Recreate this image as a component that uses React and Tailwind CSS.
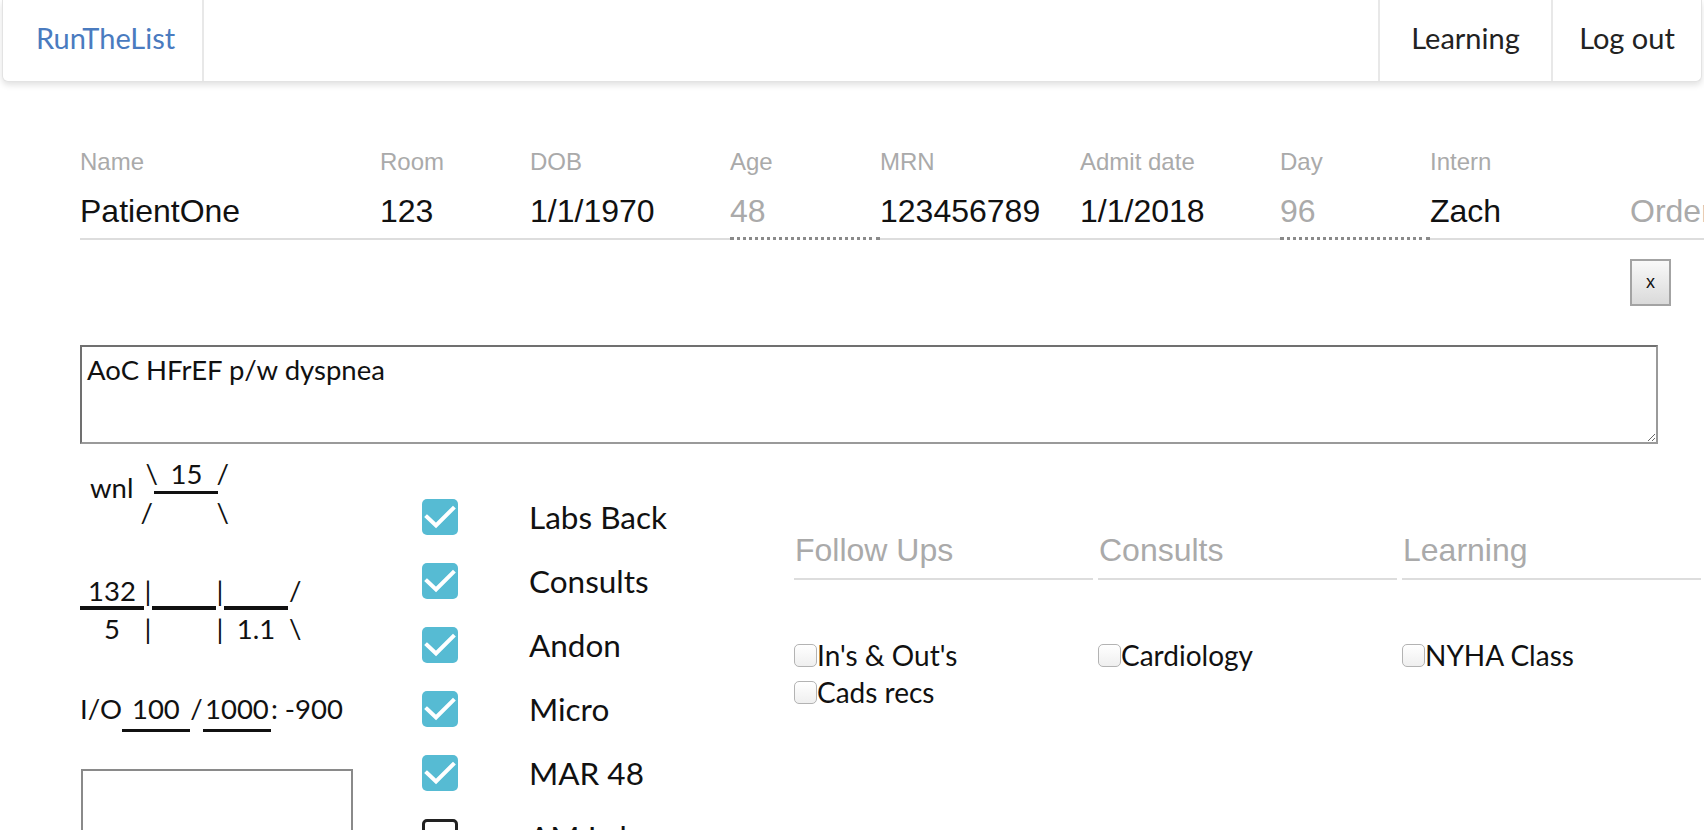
import React from 'react';

const fields = [
  { label: 'Name', value: 'PatientOne', w: 'w-[300px]' },
  { label: 'Room', value: '123', w: 'w-[150px]' },
  { label: 'DOB', value: '1/1/1970', w: 'w-[200px]' },
  { label: 'Age', value: '48', w: 'w-[150px]', calc: true },
  { label: 'MRN', value: '123456789', w: 'w-[200px]' },
  { label: 'Admit date', value: '1/1/2018', w: 'w-[200px]' },
  { label: 'Day', value: '96', w: 'w-[150px]', calc: true },
  { label: 'Intern', value: 'Zach', w: 'w-[200px]' },
  { label: '', value: 'Orders', w: 'w-[300px]', placeholder: true },
];

const checklist = [
  { label: 'Labs Back', checked: true },
  { label: 'Consults', checked: true },
  { label: 'Andon', checked: true },
  { label: 'Micro', checked: true },
  { label: 'MAR 48', checked: true },
  { label: 'AM Labs', checked: false },
];

const groups = [
  { title: 'Follow Ups', items: ["In's & Out's", 'Cads recs'] },
  { title: 'Consults', items: ['Cardiology'] },
  { title: 'Learning', items: ['NYHA Class'] },
];

function BigCheck({ checked }) {
  if (!checked) {
    return <div className="w-[36px] h-[36px] rounded-[5px] border-[3px] border-[#222] bg-white shrink-0"></div>;
  }
  return (
    <div className="w-[36px] h-[36px] rounded-[5px] bg-[#56bbd3] shrink-0">
      <svg viewBox="0 0 36 36" className="w-[36px] h-[36px]">
        <path d="M5 18 L14 26.5 L31 9.5" fill="none" stroke="white" strokeWidth="4" strokeLinecap="square" />
      </svg>
    </div>
  );
}

function SmallCheck() {
  return (
    <span className="w-[23px] h-[23px] rounded-[5px] border border-[#b3b3b3] bg-linear-to-b from-white to-[#efefef] shrink-0"></span>
  );
}

export default function App() {
  return (
    <div className="w-full h-[830px] overflow-hidden bg-white text-[#111] font-['Lato',sans-serif]">
      <nav className="mx-[2px] h-[82px] flex bg-white border-x border-b border-[#e3e3e3] rounded-b-[6px] shadow-[0_3px_6px_rgba(0,0,0,0.12)]">
        <div className="w-[201px] pl-[33px] pb-[6px] flex items-center text-[29px] text-[#4a7bbf] border-r-2 border-[#e8e8e8]">
          RunTheList
        </div>
        <div className="flex-1"></div>
        <div className="w-[173px] pb-[6px] flex items-center justify-center text-[29px] text-[#222] border-l-2 border-[#e8e8e8]">
          Learning
        </div>
        <div className="w-[150px] pb-[6px] flex items-center justify-center text-[29px] text-[#222] border-l-2 border-[#e8e8e8]">
          Log out
        </div>
      </nav>

      <main className="pl-[80px]">
        <div className="mt-[66px] flex w-max font-['Liberation_Sans',Arial,sans-serif]">
          {fields.map((f) => (
            <div key={f.value} className={`${f.w} shrink-0 flex flex-col`}>
              <div className="h-[28px] leading-[28px] text-[24px] text-[#aaa] whitespace-nowrap">{f.label}</div>
              <div
                className={
                  f.calc
                    ? 'pt-[17px] pb-[8px] leading-[36px] text-[32px] text-[#aaa] border-b-[3px] border-dotted border-[#8a8a8a]'
                    : f.placeholder
                    ? 'pt-[17px] pb-[9px] leading-[36px] text-[32px] text-[#aaa] border-b-2 border-[#ddd]'
                    : 'pt-[17px] pb-[9px] leading-[36px] text-[32px] text-[#111] border-b-2 border-[#ddd]'
                }
              >
                {f.value}
              </div>
            </div>
          ))}
        </div>

        <div className="w-[1591px] mt-[19px] flex justify-end">
          <button className="w-[41px] h-[47px] border-2 border-[#a3a3a3] bg-linear-to-b from-[#f9f9f9] to-[#dadada] text-[18px] text-[#111] font-['Liberation_Sans',Arial,sans-serif]">
            x
          </button>
        </div>

        <textarea
          className="mt-[39px] block w-[1578px] h-[99px] border-2 border-t-[#707070] border-l-[#707070] border-r-[#9a9a9a] border-b-[#9a9a9a] px-[5px] pt-[5px] leading-[36px] text-[27.5px] text-[#111] outline-none"
          defaultValue="AoC HFrEF p/w dyspnea"
        />

        <div className="mt-[19px] flex items-start">
          <div className="w-[342px] shrink-0 text-[27.5px]">
            <div className="flex items-center pl-[10px] gap-[12px]">
              <span className="leading-[22px] mb-[12px]">wnl</span>
              <div className="grid grid-cols-[9px_64px_10px]">
                <span className="leading-[22px] h-[22px]">\</span>
                <span className="leading-[22px] h-[22px] text-center">15</span>
                <span className="leading-[22px] h-[22px] -ml-[2px]">/</span>
                <span></span>
                <span className="mt-[6px] h-[3px] bg-[#111]"></span>
                <span></span>
                <span className="mt-[8px] leading-[22px] h-[22px] -ml-[5px]">/</span>
                <span></span>
                <span className="mt-[8px] leading-[22px] h-[22px] -ml-[2px]">\</span>
              </div>
            </div>

            <div className="mt-[52px] grid grid-cols-[64px_8px_64px_8px_64px_14px]">
              <span className="leading-[30px] text-center border-b-4 border-[#111]">132</span>
              <span className="leading-[30px] text-center">|</span>
              <span className="leading-[30px] border-b-4 border-[#111]"></span>
              <span className="leading-[30px] text-center">|</span>
              <span className="leading-[30px] border-b-4 border-[#111]"></span>
              <span className="leading-[30px] pl-[1px]">/</span>
              <span className="leading-[38px] text-center">5</span>
              <span className="leading-[38px] text-center">|</span>
              <span className="leading-[38px]"></span>
              <span className="leading-[38px] text-center">|</span>
              <span className="leading-[38px] text-center">1.1</span>
              <span className="leading-[38px] pl-[1px]">\</span>
            </div>

            <div className="mt-[41px] flex items-end">
              <span className="leading-[40px] pb-[3px]">I/O</span>
              <span className="w-[68px] leading-[40px] text-center border-b-[3px] border-[#111]">100</span>
              <span className="w-[13px] leading-[40px] pb-[3px] text-center">/</span>
              <span className="w-[68px] leading-[40px] text-center border-b-[3px] border-[#111]">1000</span>
              <span className="leading-[40px] pb-[3px] whitespace-pre">: -900</span>
            </div>

            <div className="mt-[37px] ml-[1px] w-[272px] h-[140px] border-2 border-[#8a8a8a]"></div>
          </div>

          <div className="w-[372px] shrink-0 pt-[36px] flex flex-col gap-[28px]">
            {checklist.map((c) => (
              <div key={c.label} className="flex items-center h-[36px]">
                <BigCheck checked={c.checked} />
                <span className="ml-[71px] text-[31.5px] leading-[36px] text-[#111]">{c.label}</span>
              </div>
            ))}
          </div>

          <div className="pt-[67px] flex gap-[5px]">
            {groups.map((g) => (
              <div key={g.title} className="w-[299px] shrink-0">
                <div className="pl-[1px] leading-[40px] pb-[8px] text-[32px] text-[#aaa] border-b-2 border-[#ddd] font-['Liberation_Sans',Arial,sans-serif]">
                  {g.title}
                </div>
                <div className="mt-[57px] flex flex-col">
                  {g.items.map((it) => (
                    <label key={it} className="flex items-center leading-[37px] text-[28px] text-[#111]">
                      <SmallCheck />
                      <span>{it}</span>
                    </label>
                  ))}
                </div>
              </div>
            ))}
          </div>
        </div>
      </main>
    </div>
  );
}
